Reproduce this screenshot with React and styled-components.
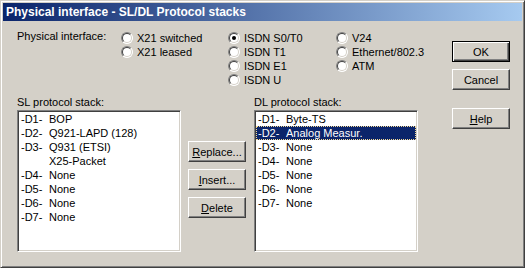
import React from 'react'
import styled, { createGlobalStyle, css } from 'styled-components'

const GlobalStyle = createGlobalStyle`
  html, body {
    margin: 0;
    padding: 0;
    background: #d4d0c8;
  }
  body {
    font-family: "Liberation Sans", Arial, sans-serif;
    font-size: 11px;
    color: #000;
  }
`

const physical = [
  ['X21 switched', 'X21 leased'],
  ['ISDN S0/T0', 'ISDN T1', 'ISDN E1', 'ISDN U'],
  ['V24', 'Ethernet/802.3', 'ATM'],
]

const slStack = [
  ['-D1-', 'BOP'],
  ['-D2-', 'Q921-LAPD (128)'],
  ['-D3-', 'Q931 (ETSI)'],
  ['', 'X25-Packet'],
  ['-D4-', 'None'],
  ['-D5-', 'None'],
  ['-D6-', 'None'],
  ['-D7-', 'None'],
]

const dlStack = [
  ['-D1-', 'Byte-TS'],
  ['-D2-', 'Analog Measur.'],
  ['-D3-', 'None'],
  ['-D4-', 'None'],
  ['-D5-', 'None'],
  ['-D6-', 'None'],
  ['-D7-', 'None'],
]

const App = () => {
  return (
    <>
      <GlobalStyle />
      <Window>
        <TitleBar>Physical interface - SL/DL Protocol stacks</TitleBar>
        <Body>
          <Main>
            <InterfaceGrid>
              <FieldLabel>Physical interface:</FieldLabel>
              {physical.map((col, i) => (
                <RadioColumn key={i}>
                  {col.map((name) => (
                    <RadioRow key={name}>
                      <Radio $checked={name === 'ISDN S0/T0'} />
                      {name}
                    </RadioRow>
                  ))}
                </RadioColumn>
              ))}
            </InterfaceGrid>

            <StacksRow>
              <StackGroup>
                <GroupLabel>SL protocol stack:</GroupLabel>
                <ListBox>
                  {slStack.map(([pre, name], i) => (
                    <ListRow key={i}>
                      <span>{pre}</span>
                      <span>{name}</span>
                    </ListRow>
                  ))}
                </ListBox>
              </StackGroup>

              <MiddleButtons>
                <Button><u>R</u>eplace...</Button>
                <Button><u>I</u>nsert...</Button>
                <Button><u>D</u>elete</Button>
              </MiddleButtons>

              <StackGroup>
                <GroupLabel>DL protocol stack:</GroupLabel>
                <ListBox>
                  {dlStack.map(([pre, name], i) => (
                    <ListRow key={i} $selected={i === 1}>
                      <span>{pre}</span>
                      <span>{name}</span>
                    </ListRow>
                  ))}
                </ListBox>
              </StackGroup>
            </StacksRow>
          </Main>

          <SideButtons>
            <Button $default>OK</Button>
            <Button>Cancel</Button>
            <Button $spaced><u>H</u>elp</Button>
          </SideButtons>
        </Body>
      </Window>
    </>
  )
}

export default App

const Window = styled.div`
  box-sizing: border-box;
  width: 525px;
  height: 268px;
  padding: 2px;
  background: #d4d0c8;
  border: 1px solid;
  border-color: #d4d0c8 #404040 #404040 #d4d0c8;
  box-shadow: inset 1px 1px #fff, inset -1px -1px #808080;
  display: flex;
  flex-direction: column;
`

const TitleBar = styled.div`
  height: 18px;
  line-height: 18px;
  padding-left: 3px;
  background: linear-gradient(to right, #0a246a, #a6caf0);
  color: #fff;
  font-weight: bold;
  font-size: 12px;
  white-space: nowrap;
`

const Body = styled.div`
  flex: 1;
  display: flex;
  justify-content: space-between;
`

const Main = styled.div`
  padding: 10px 0 0 14px;
`

const InterfaceGrid = styled.div`
  display: grid;
  grid-template-columns: 104px 107px 108px auto;
  align-items: start;
`

const FieldLabel = styled.div`
  line-height: 14px;
  margin-top: -2px;
`

const RadioColumn = styled.div`
  display: flex;
  flex-direction: column;
`

const RadioRow = styled.label`
  display: flex;
  align-items: center;
  gap: 4px;
  height: 14px;
  white-space: nowrap;
`

const Radio = styled.span`
  position: relative;
  box-sizing: border-box;
  width: 12px;
  height: 12px;
  flex: none;
  border-radius: 50%;
  border: 1px solid;
  border-color: #808080 #fff #fff #808080;
  background: #fff;

  &::before {
    content: '';
    position: absolute;
    inset: 0;
    border-radius: 50%;
    border: 1px solid;
    border-color: #404040 #d4d0c8 #d4d0c8 #404040;
  }

  ${(p) =>
    p.$checked &&
    css`
      &::after {
        content: '';
        position: absolute;
        left: 3px;
        top: 3px;
        width: 4px;
        height: 4px;
        border-radius: 50%;
        background: #000;
      }
    `}
`

const StacksRow = styled.div`
  display: flex;
  margin-top: 8px;
`

const StackGroup = styled.div`
  display: flex;
  flex-direction: column;
`

const GroupLabel = styled.div`
  line-height: 14px;
  margin-bottom: 1px;
`

const ListBox = styled.div`
  box-sizing: border-box;
  width: 164px;
  height: 142px;
  padding: 1px;
  background: #fff;
  border: 1px solid;
  border-color: #808080 #fff #fff #808080;
  box-shadow: inset 1px 1px #404040, inset -1px -1px #d4d0c8;
`

const ListRow = styled.div`
  box-sizing: border-box;
  display: grid;
  grid-template-columns: 28px 1fr;
  height: 14px;
  line-height: 14px;
  padding-left: 2px;
  white-space: nowrap;

  ${(p) =>
    p.$selected &&
    css`
      background: #0a246a;
      color: #fff;
      outline: 1px dotted #f5db95;
      outline-offset: -1px;
    `}
`

const MiddleButtons = styled.div`
  display: flex;
  flex-direction: column;
  gap: 7px;
  margin: 0 8px 0 7px;
  padding-top: 46px;
`

const SideButtons = styled.div`
  display: flex;
  flex-direction: column;
  gap: 7px;
  padding: 20px 12px 0 0;
`

const Button = styled.button`
  box-sizing: border-box;
  width: 58px;
  height: 21px;
  padding: 0;
  font-family: "Liberation Sans", Arial, sans-serif;
  font-size: 11px;
  color: #000;
  background: #d4d0c8;
  border: 1px solid;
  border-color: #fff #404040 #404040 #fff;
  box-shadow: inset -1px -1px #808080;

  u {
    text-decoration: underline;
  }

  ${(p) =>
    p.$default &&
    css`
      border-color: #000;
      box-shadow: inset 1px 1px #fff, inset -1px -1px #404040, inset -2px -2px #808080;
    `}

  ${(p) =>
    p.$spaced &&
    css`
      margin-top: 11px;
    `}
`
